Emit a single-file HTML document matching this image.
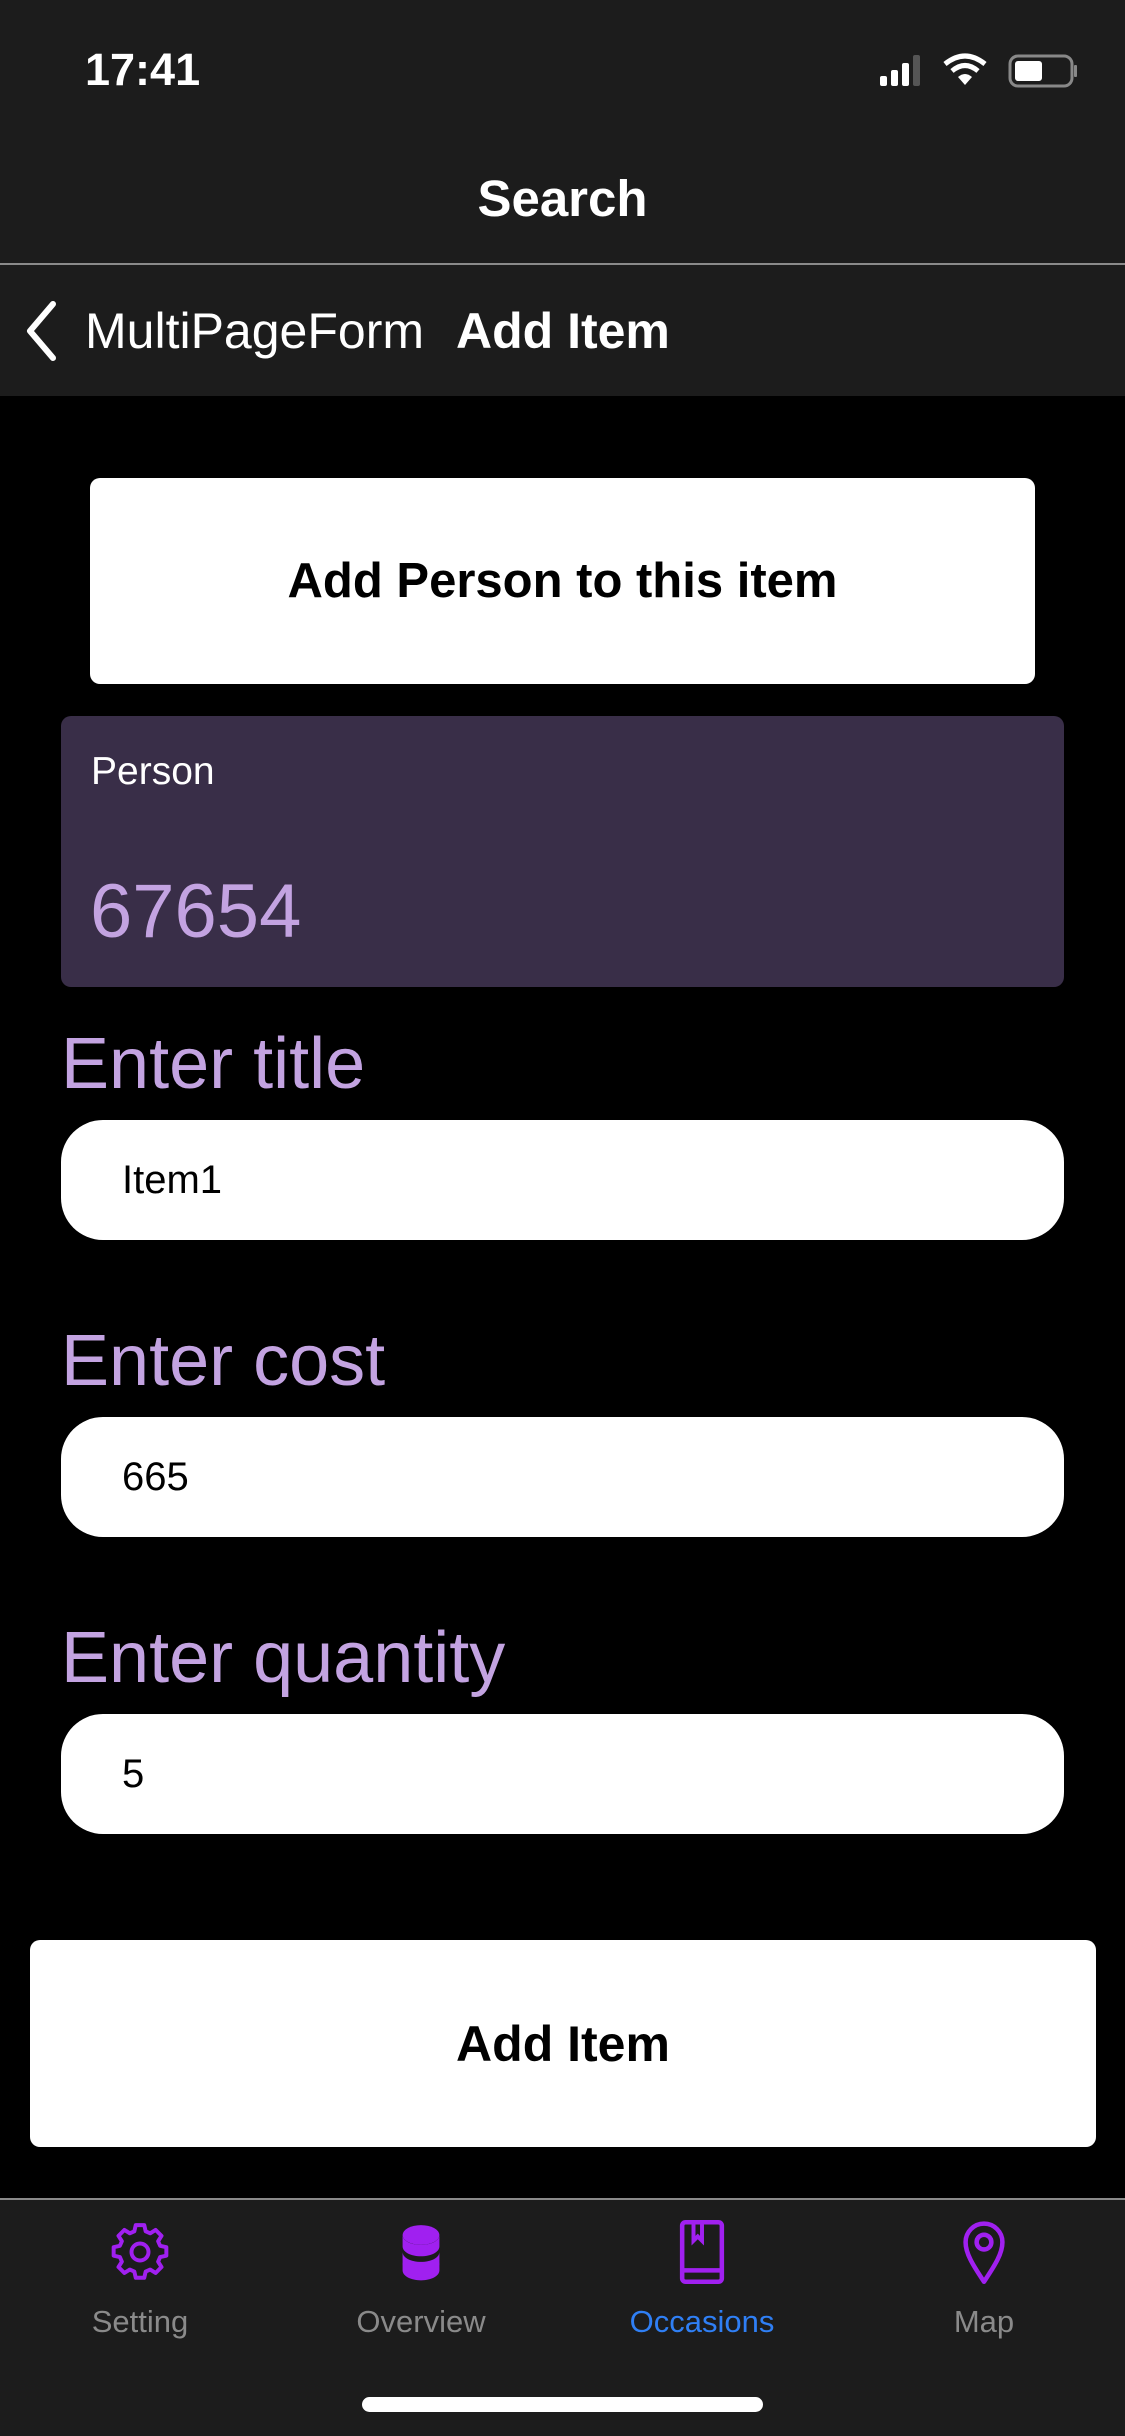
<!DOCTYPE html>
<html><head><meta charset="utf-8"><style>
*{margin:0;padding:0;box-sizing:border-box}
body{width:1125px;height:2436px;background:#000;font-family:"Liberation Sans",sans-serif;position:relative;overflow:hidden}
.a{position:absolute}
.c{display:flex;align-items:center;justify-content:center}
.lab{position:absolute;left:61px;color:#c3a3e1;font-size:72px;line-height:1}
.fld{position:absolute;left:61px;width:1003px;height:120px;background:#fff;border-radius:42px;display:flex;align-items:center;padding-left:61px;font-size:40px;color:#000}
.tab{position:absolute;top:2218px;width:200px;text-align:center}
.tab svg{display:block;margin:0 auto}
.tab span{display:block;font-size:31px;color:#8a8a8a;margin-top:18px}
</style></head><body>
<div class="a" style="left:0;top:0;width:1125px;height:396px;background:#1c1c1c"></div>
<div class="a" style="left:85px;top:44px;font-size:45px;font-weight:bold;color:#fff">17:41</div>
<svg class="a" style="left:880px;top:50px" width="200" height="40" viewBox="0 0 200 40">
<rect x="0" y="26" width="7" height="10" rx="2" fill="#fff"/>
<rect x="11" y="20" width="7" height="16" rx="2" fill="#fff"/>
<rect x="22" y="13" width="7" height="23" rx="2" fill="#fff"/>
<rect x="33" y="5" width="7" height="31" rx="2" fill="#555"/>
<g transform="translate(14,0)">
<path d="M51 14 Q71 -2 91 14" stroke="#fff" stroke-width="5" fill="none"/>
<path d="M58 21 Q71 10 84 21" stroke="#fff" stroke-width="5" fill="none"/>
<path d="M71 35 L64 27 Q71 21 78 27 Z" fill="#fff"/>
</g>
<rect x="130" y="6" width="62" height="30" rx="8" stroke="#888" stroke-width="3" fill="none"/>
<rect x="135" y="11" width="27" height="20" rx="3" fill="#fff"/>
<rect x="194" y="15" width="3" height="12" rx="1" fill="#888"/>
</svg>
<div class="a c" style="left:0;top:168px;width:1125px;height:60px;font-size:51px;font-weight:bold;color:#fff">Search</div>
<div class="a" style="left:0;top:263px;width:1125px;height:2px;background:#8a8a8a"></div>
<svg class="a" style="left:22px;top:300px" width="40" height="62" viewBox="0 0 40 62"><path d="M31 4 L8 31 L31 58" stroke="#fff" stroke-width="6" fill="none" stroke-linecap="round" stroke-linejoin="round"/></svg>
<div class="a" style="left:85px;top:302px;font-size:50px;color:#fff;line-height:58px">MultiPageForm</div>
<div class="a" style="left:456px;top:302px;font-size:50px;font-weight:bold;color:#fff;line-height:58px">Add Item</div>

<div class="a c" style="left:90px;top:478px;width:945px;height:206px;background:#fff;border-radius:10px;font-size:49px;font-weight:bold;color:#000">Add Person to this item</div>
<div class="a" style="left:61px;top:716px;width:1003px;height:271px;background:#392e48;border-radius:10px"></div>
<div class="a" style="left:91px;top:752px;font-size:39px;color:#fff;line-height:1">Person</div>
<div class="a" style="left:90px;top:874px;font-size:76px;color:#c3a3e1;line-height:1">67654</div>

<div class="lab" style="top:1028px">Enter title</div>
<div class="fld" style="top:1120px">Item1</div>
<div class="lab" style="top:1325px">Enter cost</div>
<div class="fld" style="top:1417px">665</div>
<div class="lab" style="top:1622px">Enter quantity</div>
<div class="fld" style="top:1714px">5</div>

<div class="a c" style="left:30px;top:1940px;width:1066px;height:207px;background:#fff;border-radius:10px;font-size:50px;font-weight:bold;color:#000">Add Item</div>

<div class="a" style="left:0;top:2198px;width:1125px;height:238px;background:#1c1c1c;border-top:2px solid #8a8a8a"></div>
<div class="tab" style="left:40px">
<svg width="68" height="68" viewBox="0 0 24 24"><path d="M12 2.5l1.5 0 .5 2.2 1.6.7 1.9-1.2 2.1 2.1-1.2 1.9.7 1.6 2.2.5v3l-2.2.5-.7 1.6 1.2 1.9-2.1 2.1-1.9-1.2-1.6.7-.5 2.2h-3l-.5-2.2-1.6-.7-1.9 1.2-2.1-2.1 1.2-1.9-.7-1.6-2.2-.5v-3l2.2-.5.7-1.6-1.2-1.9 2.1-2.1 1.9 1.2 1.6-.7.5-2.2z" stroke="#a020f0" stroke-width="1.4" fill="none" stroke-linejoin="round"/><circle cx="12" cy="12" r="3" stroke="#a020f0" stroke-width="1.4" fill="none"/></svg>
<span>Setting</span></div>
<div class="tab" style="left:321px">
<svg width="68" height="68" viewBox="0 0 24 24"><ellipse cx="12" cy="6" rx="6.5" ry="3.5" fill="#a020f0"/><path d="M5.5 6v4c0 2 2.9 3.5 6.5 3.5s6.5-1.5 6.5-3.5V6c0 2-2.9 3.5-6.5 3.5S5.5 8 5.5 6z" fill="#a020f0"/><path d="M5.5 11v4c0 2 2.9 3.5 6.5 3.5s6.5-1.5 6.5-3.5v-4c0 2-2.9 3.5-6.5 3.5S5.5 13 5.5 11z" fill="#a020f0" transform="translate(0,1)"/><path d="M5.5 16v3c0 2 2.9 3.5 6.5 3.5s6.5-1.5 6.5-3.5v-3c0 2-2.9 3.5-6.5 3.5S5.5 18 5.5 16z" fill="#a020f0" transform="translate(0,-0.5)"/></svg>
<span>Overview</span></div>
<div class="tab" style="left:602px">
<svg width="68" height="68" viewBox="0 0 24 24"><rect x="5" y="1.5" width="14" height="21" rx="1.2" stroke="#a020f0" stroke-width="1.6" fill="none"/><path d="M5 18.5h14" stroke="#a020f0" stroke-width="1.6"/><path d="M9 1.5v6.5l1.5-1.5 1.5 1.5V1.5" stroke="#a020f0" stroke-width="1.4" fill="none"/></svg>
<span style="color:#2f7ff5">Occasions</span></div>
<div class="tab" style="left:884px">
<svg width="68" height="68" viewBox="0 0 24 24"><path d="M12 22.5C8 16.5 5.5 12.5 5.5 8.5a6.5 6.5 0 0 1 13 0c0 4-2.5 8-6.5 14z" stroke="#a020f0" stroke-width="1.6" fill="none" stroke-linejoin="round"/><circle cx="12" cy="8.5" r="2.6" stroke="#a020f0" stroke-width="1.6" fill="none"/></svg>
<span>Map</span></div>
<div class="a" style="left:362px;top:2397px;width:401px;height:15px;background:#fff;border-radius:8px"></div>
</body></html>
